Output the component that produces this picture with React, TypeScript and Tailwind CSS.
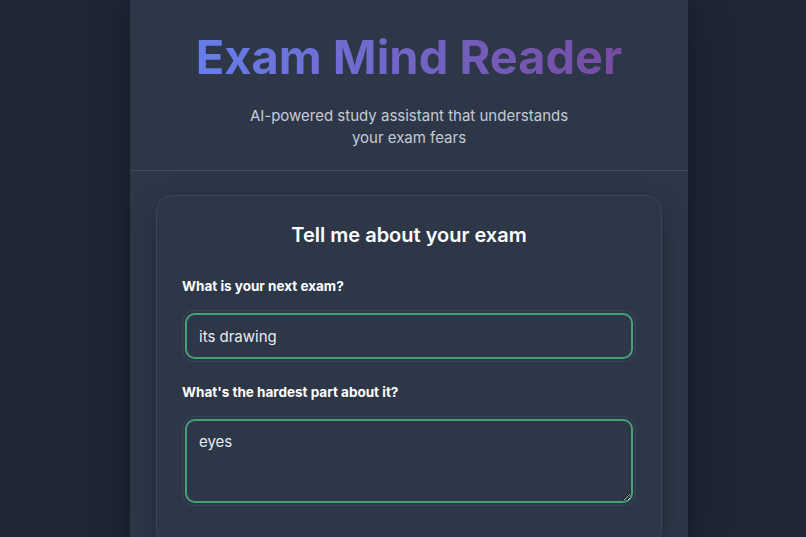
import { useState } from 'react';

function Field({ label, children }: { label: string; children: React.ReactNode }) {
  return (
    <div className="mb-[20px]">
      <label className="block text-[13.5px] leading-5 font-bold text-white mb-[14px]">{label}</label>
      <div className="rounded-[12px] border border-[#3a4458] p-[2px]">{children}</div>
    </div>
  );
}

export default function App() {
  const [exam, setExam] = useState('its drawing');
  const [hardest, setHardest] = useState('eyes');

  return (
    <div className="min-h-screen bg-[#1f2636] flex justify-center pl-[12px] font-['Inter',sans-serif]">
      <div className="w-[558px] bg-[#2d3748] shadow-[0_0_40px_rgba(0,0,0,0.4)]">
        <header className="text-center pt-[29px] pb-[21px] border-b border-[#414b5e]">
          <h1 className="text-[47px] leading-[56px] font-bold bg-gradient-to-r from-[#667eea] to-[#764ba2] bg-clip-text text-transparent inline-block">
            Exam Mind Reader
          </h1>
          <p className="mt-[20px] mx-auto max-w-[340px] text-[15px] leading-[22px] text-[#c5cbd6]">
            AI-powered study assistant that understands your exam fears
          </p>
        </header>

        <main className="px-[26px] pt-[24px]">
          <div className="rounded-2xl border border-[#3c4659] bg-[#2d3748] shadow-[0_10px_30px_rgba(0,0,0,0.25)] px-[25px] pt-[25px] pb-[20px]">
            <h2 className="text-center text-[20px] leading-7 font-semibold text-white mb-[27px]">
              Tell me about your exam
            </h2>

            <Field label="What is your next exam?">
              <input
                value={exam}
                onChange={(e) => setExam(e.target.value)}
                className="w-full h-[46px] rounded-[10px] border-2 border-[#48a077] bg-[#2d3748] px-[12px] text-[15px] text-[#e8ebf0] outline-none"
              />
            </Field>

            <Field label="What's the hardest part about it?">
              <textarea
                value={hardest}
                onChange={(e) => setHardest(e.target.value)}
                className="block w-full h-[84px] rounded-[10px] border-2 border-[#48a077] bg-[#2d3748] px-[12px] py-[10px] text-[15px] leading-[22px] text-[#e8ebf0] outline-none"
              />
            </Field>
          </div>
        </main>
      </div>
    </div>
  );
}
